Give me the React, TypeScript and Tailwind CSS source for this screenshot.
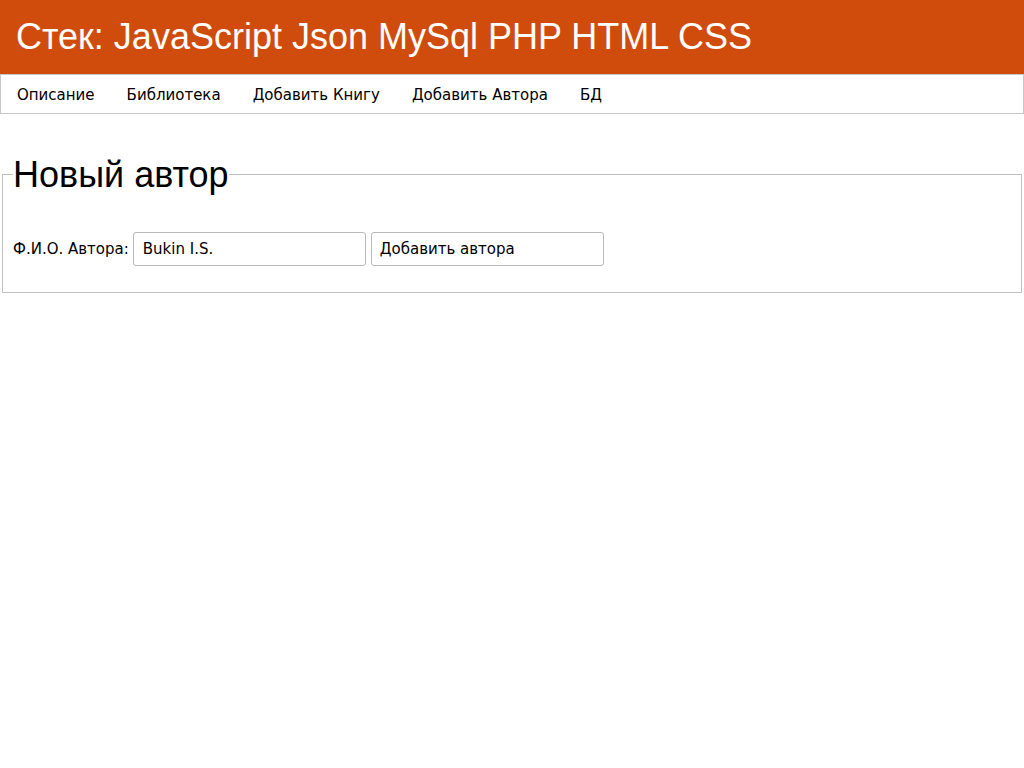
export default function App() {
  const links = ["Описание", "Библиотека", "Добавить Книгу", "Добавить Автора", "БД"];
  return (
    <div className="min-h-screen bg-white text-black">
      <header className="flex h-[74px] items-center bg-[#d04c0d] px-4">
        <h1 className="font-['Liberation_Sans',Arial,sans-serif] text-[36px] leading-none text-white">
          Стек: JavaScript Json MySql PHP HTML CSS
        </h1>
      </header>

      <nav className="flex h-[40px] items-center border border-[#c8c8c8] pt-[2px] font-['DejaVu_Sans',sans-serif] text-[15px]">
        {links.map((l) => (
          <a key={l} href="#" className="px-4 text-black">
            {l}
          </a>
        ))}
      </nav>

      <fieldset className="mx-[2px] mt-[40px] border border-[#c0c0c0] px-[10px] pb-[26px]">
        <legend className="font-['Liberation_Sans',Arial,sans-serif] text-[36px] leading-[41px]">
          Новый автор
        </legend>
        <div className="mt-[37px] flex items-center font-['DejaVu_Sans',sans-serif]">
          <label className="mr-[4px] text-[15px]">Ф.И.О. Автора:</label>
          <input
            defaultValue="Bukin I.S."
            className="h-[34px] w-[233px] rounded-[3px] border border-[#b8b8b8] px-[9px] text-[15px] outline-none"
          />
          <button className="ml-[5px] h-[34px] w-[233px] rounded-[3px] border border-[#b8b8b8] bg-white px-[8px] text-left text-[15px]">
            Добавить автора
          </button>
        </div>
      </fieldset>
    </div>
  );
}
